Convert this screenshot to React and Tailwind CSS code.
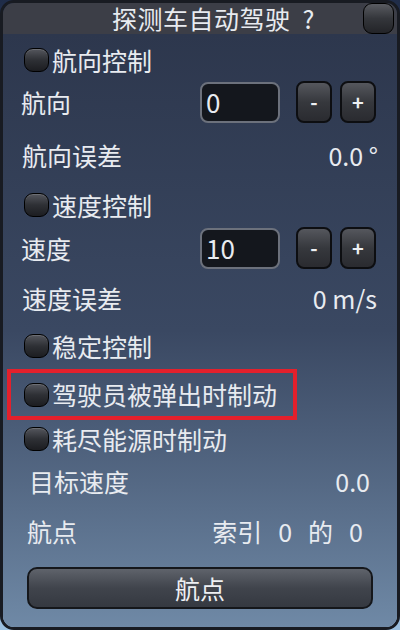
import React from "react";

const font = { fontFamily: '"Noto Sans CJK SC", "Noto Sans", sans-serif' };

const Toggle = () => (
  <span className="inline-block w-[25px] h-[24px] rounded-[9px] border border-black bg-gradient-to-b from-[#55575e] via-[#2e3035] to-[#1c1d21] shadow-[inset_0_1px_0_rgba(255,255,255,0.15)] mr-[3px]" />
);

const StepButton = ({ label }) => (
  <button className="w-[36px] h-[42px] rounded-[8px] border-2 border-[#0d0e11] bg-gradient-to-b from-[#55575d] via-[#36383d] to-[#2a2b30] text-[#eef0f3] text-[20px] font-bold leading-none flex items-center justify-center">
    {label}
  </button>
);

const NumberRow = ({ label, value }) => (
  <div className="h-[42px] flex items-center pl-[18px] pr-[21px]">
    <span className="flex-1">{label}</span>
    <div className="w-[80px] h-[41px] rounded-[8px] border-2 border-[#6c717c] bg-[#14171d] flex items-center pl-[4px] text-[26px] mr-[16px]">
      {value}
    </div>
    <div className="flex gap-[8px]">
      <StepButton label="-" />
      <StepButton label="+" />
    </div>
  </div>
);

const ToggleRow = ({ label, h }) => (
  <div className={`flex items-center pl-[21px] ${h}`}>
    <Toggle />
    <span>{label}</span>
  </div>
);

export default function App() {
  return (
    <div
      className="w-[400px] h-[630px] bg-gradient-to-b from-[#1f2c48] to-[#9cc0e0] overflow-hidden"
      style={font}
    >
      <div className="w-[400px] h-[630px] rounded-[14px] border-[3px] border-[#181b22] overflow-hidden flex flex-col text-[25px] text-[#e8ebf0] leading-none">
        <div className="h-[31px] shrink-0 bg-[#3c3e47] flex items-center relative">
          <span className="pl-[109px] text-[25px] tracking-[0.5px]">探测车自动驾驶</span>
          <span className="pl-[12px] text-[25px]">?</span>
          <span className="absolute right-[3px] top-0 w-[31px] h-[31px] rounded-[9px] border border-black bg-gradient-to-b from-[#5a5c62] via-[#34363b] to-[#232428]" />
        </div>
        <div className="flex-1 flex flex-col bg-gradient-to-b from-[#2d374d] via-[#3a4862] to-[#6f89a6] pt-[5px]">
          <ToggleRow label="航向控制" h="h-[42px]" />
          <NumberRow label="航向" value="0" />
          <div className="h-[64px] flex items-center justify-between pl-[19px] pr-[19px]">
            <span>航向误差</span>
            <span>0.0 °</span>
          </div>
          <ToggleRow label="速度控制" h="h-[36px]" />
          <div className="h-[50px] flex items-center">
            <div className="w-full">
              <NumberRow label="速度" value="10" />
            </div>
          </div>
          <div className="h-[50px] flex items-center justify-between pl-[19px] pr-[20px]">
            <span>速度误差</span>
            <span>0 m/s</span>
          </div>
          <ToggleRow label="稳定控制" h="h-[46px]" />
          <div className="h-[51px] ml-[4px] w-[290px] border-[4px] border-[#e3202c] flex items-center pl-[13px]">
            <Toggle />
            <span>驾驶员被弹出时制动</span>
          </div>
          <ToggleRow label="耗尽能源时制动" h="h-[38px]" />
          <div className="h-[46px] flex items-center justify-between pl-[26px] pr-[27px]">
            <span>目标速度</span>
            <span>0.0</span>
          </div>
          <div className="h-[54px] flex items-center justify-between pl-[24px] pr-[34px]">
            <span>航点</span>
            <div className="flex items-center gap-[16px]">
              <span>索引</span>
              <span>0</span>
              <span>的</span>
              <span>0</span>
            </div>
          </div>
          <div className="pt-[9px] px-[24px]">
            <button className="w-full h-[42px] rounded-[10px] border-2 border-[#15171b] bg-gradient-to-b from-[#5f636b] via-[#40444c] to-[#353941] text-[25px] text-[#eef0f3] flex items-center justify-center">
              航点
            </button>
          </div>
        </div>
      </div>
    </div>
  );
}
